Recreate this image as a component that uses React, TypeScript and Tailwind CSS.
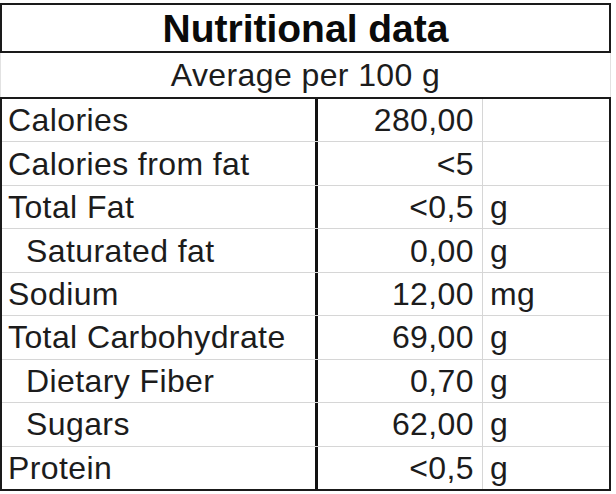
import React from "react";

type Row = { label: string; value: string; unit: string; indent?: boolean };

const rows: Row[] = [
  { label: "Calories", value: "280,00", unit: "" },
  { label: "Calories from fat", value: "<5", unit: "" },
  { label: "Total Fat", value: "<0,5", unit: "g" },
  { label: "Saturated fat", value: "0,00", unit: "g", indent: true },
  { label: "Sodium", value: "12,00", unit: "mg" },
  { label: "Total Carbohydrate", value: "69,00", unit: "g" },
  { label: "Dietary Fiber", value: "0,70", unit: "g", indent: true },
  { label: "Sugars", value: "62,00", unit: "g", indent: true },
  { label: "Protein", value: "<0,5", unit: "g" },
];

export default function App() {
  return (
    <div className="w-[616px] h-[494px] bg-white pt-[3px] text-[#1c1c1c] font-['Liberation_Sans',Arial,sans-serif] overflow-hidden">
      <div className="w-[611px] flex flex-col">
        <div className="h-[50px] border-2 border-[#1a1a1a] flex items-center justify-center text-[39px] font-bold leading-none text-[#0a0a0a]">
          Nutritional data
        </div>
        <div className="h-[44px] border-x border-[#e2e2e2] flex items-center justify-center text-[32px] tracking-[0.4px] leading-none">
          Average per 100 g
        </div>
        <div className="h-[394px] border-2 border-[#1a1a1a] flex flex-col">
          {rows.map((r, i) => (
            <div
              key={r.label}
              className={
                "flex-1 flex items-stretch text-[32px] tracking-[0.4px] leading-none " +
                (i < rows.length - 1 ? "border-b border-[#d6d6d6]" : "")
              }
            >
              <div
                className={
                  "w-[316px] border-r-[3px] border-[#111] flex items-center whitespace-nowrap " +
                  (r.indent ? "pl-[24px]" : "pl-[6px]")
                }
              >
                {r.label}
              </div>
              <div className="w-[165px] border-r border-[#d6d6d6] flex items-center justify-end pr-[8px]">
                {r.value}
              </div>
              <div className="flex-1 flex items-center pl-[7px]">{r.unit}</div>
            </div>
          ))}
        </div>
      </div>
    </div>
  );
}
